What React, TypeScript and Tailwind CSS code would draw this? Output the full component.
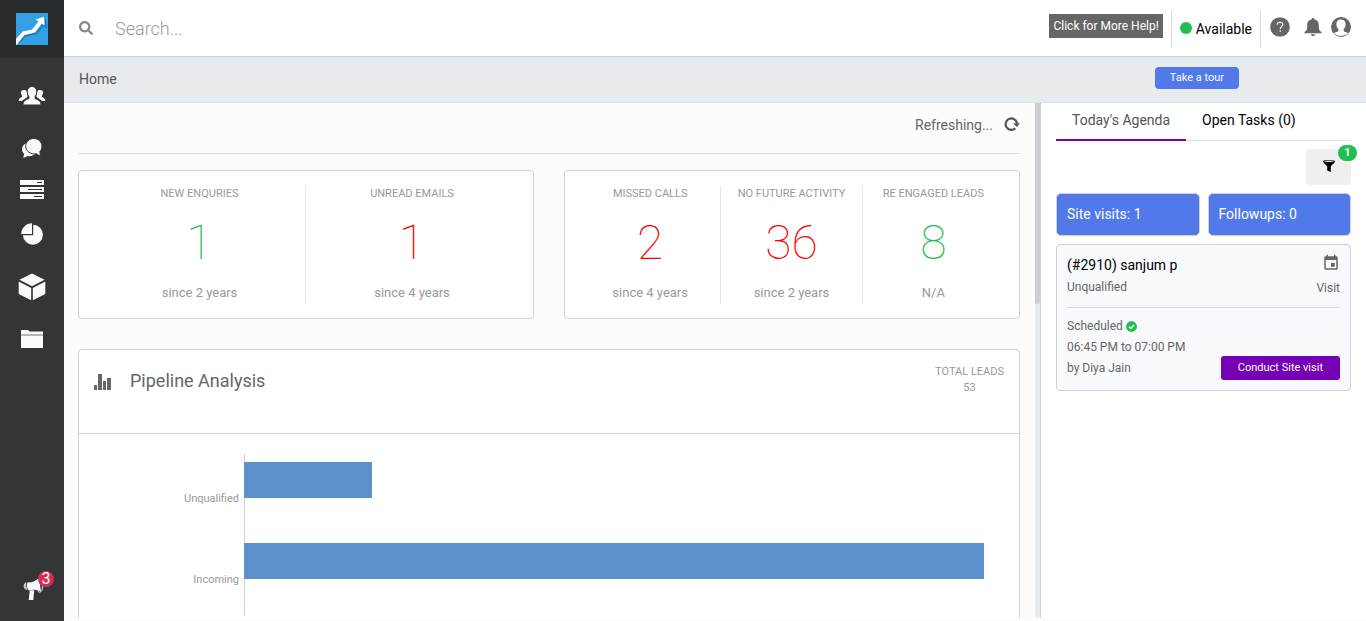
import React from "react";
import { FaSearch } from "react-icons/fa";
import { MdEvent } from "react-icons/md";

type Metric = { label: string; value: string; note: string; tone: "good" | "bad" };

const activity: Metric[] = [
  { label: "NEW ENQURIES", value: "1", note: "since 2 years", tone: "good" },
  { label: "UNREAD EMAILS", value: "1", note: "since 4 years", tone: "bad" },
];

const attention: Metric[] = [
  { label: "MISSED CALLS", value: "2", note: "since 4 years", tone: "bad" },
  { label: "NO FUTURE ACTIVITY", value: "36", note: "since 2 years", tone: "bad" },
  { label: "RE ENGAGED LEADS", value: "8", note: "N/A", tone: "good" },
];

const pipeline = [
  { stage: "Unqualified", share: 16.8 },
  { stage: "Incoming", share: 97.5 },
];

function Logo() {
  return (
    <svg width="32" height="32" viewBox="0 0 32 32" aria-hidden="true">
      <rect width="32" height="32" fill="#339fe5" />
      <path d="M3 30 L9 23 L20.500 20.500 L27.500 11.500 L30 14 L29.500 6" fill="none" stroke="#1d7cba" strokeWidth="1.500" />
      <path d="M0 31.500 V26 L6.500 18.500 L16 16.500 L22.500 8.500 L19.500 6.500 L28 3.800 L28.500 12.500 L25.800 10.500 L18.800 19.500 L8.500 22 L1 31.500 Z" fill="#fff" />
    </svg>
  );
}

function PeopleIcon() {
  return (
    <svg width="28" height="20" viewBox="0 0 28 20" fill="#f8fafd" aria-hidden="true">
      <path d="M14 1c2.700 0 4.200 1.700 4.200 4.600 0 2.300-.7 4-1.600 5v1.600c0 1.400 5.800 1.800 5.800 5.200V18.500H5.600v-1.100c0-3.400 5.800-3.800 5.800-5.200v-1.600c-.9-1-1.600-2.700-1.600-5C9.800 2.700 11.300 1 14 1z" />
      <path d="M6 4c1.300 0 2.300.5 2.700 1.400.1 2.300.6 3.900 1 5.100l-.9.700c.1 1-3.600 1.800-4.700 3.700H.8v-1c0-2 3.200-2.200 3.200-3.400v-.9c-.7-.7-1.100-1.700-1.100-3C2.900 4.800 4.200 4 6 4z" />
      <path d="M22 4c-1.300 0-2.300.5-2.700 1.400-.1 2.300-.6 3.900-1 5.100l.9.700c-.1 1 3.600 1.800 4.700 3.700h3.300v-1c0-2-3.200-2.200-3.200-3.400v-.9c.7-.7 1.100-1.700 1.100-3C25.100 4.800 23.800 4 22 4z" />
    </svg>
  );
}

function ChatIcon() {
  return (
    <svg width="22" height="20" viewBox="0 0 22 20" aria-hidden="true">
      <path d="M8.500 4.500c4.200 0 7.500 3 7.500 6.800s-3.300 6.900-7.500 6.900c-.8 0-1.500-.1-2.200-.3C5 19 3.600 19.400 2 19.400c.7-1.100 1-2.200 1-3.700-1.200-1.200-2-2.700-2-4.400 0-3.800 3.300-6.800 7.500-6.800z" fill="#f8fafd" />
      <path d="M12.700.5c4.600 0 8.200 3.400 8.200 7.700 0 2.200-.7 4-2 5.400 0 1.500.3 2.600 1 3.700-2 0-3.500-.5-4.500-1.600-5.500 1.200-10.700-2.400-10.700-7.500C4.700 3.900 8.300.5 12.700.5z" fill="#f8fafd" stroke="#343537" />
    </svg>
  );
}

function ServersIcon() {
  return (
    <svg width="26" height="20" viewBox="0 0 26 20" aria-hidden="true">
      <g fill="#f8fafd">
        <rect x="1" y="0" width="24" height="5" />
        <rect x="1" y="7" width="24" height="5" />
        <rect x="1" y="14" width="24" height="5" />
      </g>
      <g fill="#343537">
        <rect x="18" y="2" width="5" height="1" />
        <rect x="9" y="9" width="14" height="1" />
        <rect x="15" y="16" width="8" height="1" />
      </g>
    </svg>
  );
}

function PieIcon() {
  return (
    <svg width="24" height="24" viewBox="0 0 24 24" fill="#f8fafd" aria-hidden="true">
      <path d="M12 1.200V12H1.200C1.200 6 6 1.200 12 1.200z" />
      <path d="M13.200 2.800A10 10 0 1 1 2.900 13.200H13.200z" />
    </svg>
  );
}

function CubeIcon() {
  return (
    <svg width="28" height="28" viewBox="0 0 28 28" fill="#f8fafd" aria-hidden="true">
      <path d="M14 .5 26.500 6.800 14 13.300 1.500 6.800z" />
      <path d="M.7 8.500 13.200 14.900V27.300L.7 21z" />
      <path d="M27.300 8.500 14.800 14.900V27.300L27.300 21z" />
    </svg>
  );
}

function FolderIcon() {
  return (
    <svg width="24" height="20" viewBox="0 0 24 20" fill="#f8fafd" aria-hidden="true">
      <path d="M1 1h7l1.500 1.500H23V5H1z" />
      <path d="M1 5h22v1.500H1z" fill="#b4b6b9" />
      <path d="M1 6.500h22V19H1z" />
    </svg>
  );
}

function MegaphoneIcon() {
  return (
    <svg width="24" height="24" viewBox="0 0 24 24" aria-hidden="true">
      <path d="M5.500 5.500C9 6 13 4.500 17 1l2 13.500c-4-2-8.500-2.500-12-1C5 12 4.500 8 5.500 5.500z" fill="#f8fafd" />
      <path d="M4.500 5.200C2.300 5.500 1.200 8.500 1.900 10.500c.5 1.500 1.900 2.600 3.600 2.500C4.200 11 4 7.500 4.500 5.200z" fill="#c9cbce" />
      <path d="M7.800 13.200h4.400l-.9 9.800H6.700z" fill="#f8fafd" />
      <path d="M15.500 13.500c2 3.500 5 1.500 5.300-5" fill="none" stroke="#f8fafd" />
    </svg>
  );
}

function HelpIcon() {
  return (
    <svg width="20" height="20" viewBox="0 0 20 20" aria-hidden="true">
      <circle cx="10" cy="10" r="9.800" fill="#666" />
      <path d="M7.200 7.700C7.200 5.900 8.300 5.200 10 5.200s2.800.9 2.800 2.400c0 2-2.600 2.100-2.600 4.500" fill="none" stroke="#fff" strokeWidth="1.100" />
      <rect x="9.600" y="13.300" width="1.300" height="1.500" fill="#fff" />
    </svg>
  );
}

function BellIcon() {
  return (
    <svg width="18" height="20" viewBox="0 0 18 20" fill="#666" aria-hidden="true">
      <path d="M9 1c.7 0 1.200.5 1.200 1.300 3 .6 4.600 2.700 4.600 5.700 0 4.500.5 6 2.800 7v1.200H.4V15c2.300-1 2.800-2.500 2.800-7 0-3 1.600-5.100 4.600-5.700C7.800 1.500 8.300 1 9 1z" />
      <path d="M6.700 17.200h4.600c-.2 1.200-1.100 1.800-2.300 1.800s-2.100-.6-2.300-1.800z" />
    </svg>
  );
}

function AccountIcon() {
  return (
    <svg width="20" height="20" viewBox="0 0 20 20" aria-hidden="true">
      <circle cx="10" cy="10" r="9.400" fill="#666" stroke="#666" strokeWidth="1.100" />
      <path d="M10 2.600c3 0 4.600 2 4.600 4.700 0 2.200-.9 4-2 5v1.500c0 1 3.400 1.400 4.500 2.400A9.200 9.200 0 0 1 10 19a9.200 9.200 0 0 1-7.100-2.800c1.100-1 4.500-1.400 4.500-2.400v-1.500c-1.100-1-2-2.800-2-5C5.400 4.600 7 2.600 10 2.600z" fill="#fff" />
    </svg>
  );
}

function RefreshIcon() {
  return (
    <svg width="16" height="16" viewBox="0 0 16 16" aria-hidden="true">
      <path d="M11.300 12.300A5.700 5.700 0 1 1 13 7.500" fill="none" stroke="#555" strokeWidth="2.200" />
      <path d="M9.200 7.200H16l-3.200 3.800z" fill="#555" />
    </svg>
  );
}

function BarsIcon() {
  return (
    <svg width="18" height="16" viewBox="0 0 18 16" fill="#666" aria-hidden="true">
      <rect x="0" y="11" width="3" height="5" />
      <rect x="4" y="0" width="4" height="16" />
      <rect x="9" y="7" width="3" height="9" />
      <rect x="13" y="4" width="4" height="12" />
    </svg>
  );
}

function FunnelIcon() {
  return (
    <svg width="14" height="14" viewBox="0 0 14 14" aria-hidden="true">
      <path d="M1 2.500C1 .5 13 .5 13 2.500c0 1-3.700 4-4.200 5V13L5.200 11.500v-4C4.700 6.500 1 3.500 1 2.500z" fill="#000" />
      <ellipse cx="7" cy="2.300" rx="4.600" ry=".8" fill="#ddd" />
    </svg>
  );
}

function CheckIcon() {
  return (
    <svg width="11" height="11" viewBox="0 0 11 11" aria-hidden="true">
      <circle cx="5.500" cy="5.500" r="5.400" fill="#1fbf52" />
      <path d="M3 5.700 4.800 7.400 8 3.900" fill="none" stroke="#fff" strokeWidth="1.500" />
    </svg>
  );
}

function MetricCard({ items }: { items: Metric[] }) {
  return (
    <section className="grid flex-1 auto-cols-fr grid-flow-col rounded border border-[#cdd0da] bg-white p-[15px]">
      {items.map((m) => (
        <div
          key={m.label}
          className="flex flex-col items-center border-r border-[#e3e5e8] pb-0.5 whitespace-nowrap last:border-r-0"
        >
          <h3 className="text-[11px] leading-[15px] text-[#999]">{m.label}</h3>
          <p
            className={
              m.tone === "good"
                ? "mt-3 text-5xl leading-[60px] font-thin text-[#1fbf52]"
                : "mt-3 text-5xl leading-[60px] font-thin text-[#ff0000]"
            }
          >
            {m.value}
          </p>
          <p className="mt-3 text-[13px] leading-4 text-[#999]">{m.note}</p>
        </div>
      ))}
    </section>
  );
}

function Sidebar() {
  return (
    <nav aria-label="Main" className="flex w-16 shrink-0 flex-col items-center bg-[#343537]">
      <a href="#home" aria-label="Dashboard" className="flex h-[58px] w-full items-center justify-center bg-[#282a2b]">
        <Logo />
      </a>
      <a href="#contacts" aria-label="Contacts" className="mt-7"><PeopleIcon /></a>
      <a href="#messages" aria-label="Messages" className="mt-8"><ChatIcon /></a>
      <a href="#lists" aria-label="Lists" className="mt-[22px]"><ServersIcon /></a>
      <a href="#reports" aria-label="Reports" className="mt-[22px]"><PieIcon /></a>
      <a href="#inventory" aria-label="Inventory" className="mt-[27px]"><CubeIcon /></a>
      <a href="#files" aria-label="Files" className="mt-7"><FolderIcon /></a>
      <a href="#news" aria-label="Announcements" className="relative mt-auto mb-5 ml-1">
        <MegaphoneIcon />
        <span className="absolute -top-1.5 -right-2 flex size-4 items-center justify-center rounded-full bg-[#d62d50] text-base text-white">
          3
        </span>
      </a>
    </nav>
  );
}

function TopBar() {
  return (
    <header className="flex h-[57px] shrink-0 items-center border-b border-[#cdd0d6] bg-white pr-[15px] pl-[15px]">
      <label htmlFor="search" className="text-[#888]">
        <FaSearch size={14} aria-label="Search" />
      </label>
      <input
        id="search"
        type="text"
        placeholder="Search..."
        className="ml-[22px] min-w-0 flex-1 pt-0.5 text-lg font-light text-[#555] outline-none placeholder:text-[#999]"
      />
      <button type="button" className="mb-1 h-6 bg-[#666] px-1 pb-px text-xs text-white">
        Click for More Help!
      </button>
      <button
        type="button"
        className="ml-2 flex h-[37px] items-center gap-1 border-x border-[#d5d8dc] px-2 text-sm text-black"
      >
        <span className="size-3 rounded-full bg-[#1fbf52]" />
        <span className="pt-0.5">Available</span>
      </button>
      <div className="mb-[3px] ml-[9px] flex items-center">
        <button type="button" aria-label="Help"><HelpIcon /></button>
        <button type="button" aria-label="Notifications" className="ml-[14px]"><BellIcon /></button>
        <button type="button" aria-label="Account" className="ml-[9px]"><AccountIcon /></button>
      </div>
    </header>
  );
}

function Pipeline() {
  return (
    <section className="mt-[30px] rounded-t border border-[#cdd0da] bg-white">
      <header className="flex h-[84px] items-start border-b border-[#cdd0da] px-[15px] pt-[14px]">
        <div className="mt-[10px]"><BarsIcon /></div>
        <h2 className="ml-[18px] text-lg leading-[34px] text-[#666]">Pipeline Analysis</h2>
        <p className="ml-auto text-center text-[11px] leading-4 text-[#999]">
          TOTAL LEADS
          <br />
          53
        </p>
      </header>
      <ul className="h-[400px] pt-5 pr-[15px]">
        {pipeline.map((row) => (
          <li key={row.stage} className="flex h-[81px]">
            <span className="w-40 pt-[37px] text-right text-[11px] leading-4 text-[#999]">{row.stage}</span>
            <div className="ml-[5px] flex-1 border-l border-[#c8d3ee] pt-2">
              <div className="-ml-px h-9 bg-[#5c90ca]" style={{ width: row.share + "%" }} />
            </div>
          </li>
        ))}
      </ul>
    </section>
  );
}

function Agenda() {
  return (
    <aside className="w-[326px] shrink-0 border-l border-[#cdd0da] bg-white px-[15px]">
      <div role="tablist" className="flex h-[38px] border-b border-[#dee0e4] text-sm">
        <button role="tab" aria-selected="true" type="button" className="h-[38px] border-b-2 border-[#7600b5] px-4 pb-[3px] text-[#555]">
          Today's Agenda
        </button>
        <button role="tab" aria-selected="false" type="button" className="h-[38px] px-4 pb-[5px] text-black">
          Open Tasks (0)
        </button>
      </div>
      <div className="mt-2 flex justify-end">
        <button
          type="button"
          aria-label="Filters"
          className="relative flex h-9 w-[45px] items-center justify-center rounded bg-[#efefef] pb-0.5"
        >
          <FunnelIcon />
          <span className="absolute -top-1 -right-1.5 flex h-4 w-[19px] items-center justify-center rounded-full bg-[#1fbf52] text-[11px] font-bold text-white">
            1
          </span>
        </button>
      </div>
      <div className="mt-2 grid grid-cols-2 gap-2">
        <button type="button" className="h-[43px] rounded-[5px] border border-[#cdd0da] bg-[#5179e9] px-2.5 pb-0.5 text-left text-sm text-white">
          Site visits: 1
        </button>
        <button type="button" className="h-[43px] rounded-[5px] border border-[#cdd0da] bg-[#5179e9] px-2.5 pb-0.5 text-left text-sm text-white">
          Followups: 0
        </button>
      </div>
      <article className="mt-2 rounded border border-[#cdd0da] bg-[#f8f9fc] px-2.5 pt-2 pb-2.5 text-xs text-[#666]">
        <div className="flex justify-between border-b border-[#d8dbe0] pb-[10px]">
          <div>
            <h3 className="text-sm leading-6 text-black">(#2910) sanjum p</h3>
            <p className="leading-5">Unqualified</p>
          </div>
          <div className="flex flex-col items-end pt-px">
            <MdEvent size={18} />
            <p className="mt-2 leading-4">Visit</p>
          </div>
        </div>
        <div className="mt-2 flex items-end justify-between">
          <div className="pb-px leading-[21px]">
            <p className="flex items-center gap-[3px]">
              Scheduled <CheckIcon />
            </p>
            <p>06:45 PM to 07:00 PM</p>
            <p>by Diya Jain</p>
          </div>
          <button type="button" className="h-6 rounded-[3px] bg-[#7600b5] px-[17px] text-[11px] text-white">
            Conduct Site visit
          </button>
        </div>
      </article>
    </aside>
  );
}

export default function App() {
  return (
    <div className="flex h-screen overflow-hidden bg-[#fcfcfc] font-['Roboto',sans-serif]">
      <Sidebar />
      <div className="flex min-w-0 flex-1 flex-col">
        <TopBar />
        <div className="flex h-[46px] shrink-0 items-start justify-between border-b border-[#dde0e4] bg-[#e7ebee] pt-[10px] pr-[127px] pl-[15px]">
          <h1 className="text-sm leading-6 text-[#555]">Home</h1>
          <button type="button" className="h-[22px] rounded-sm bg-[#5179e9] px-[15px] text-[11px] text-white">
            Take a tour
          </button>
        </div>
        <div className="mb-[3px] flex min-h-0 flex-1">
          <main className="min-w-0 flex-1 overflow-hidden pr-[15px] pl-[14px]">
            <div className="flex h-[51px] items-center justify-end gap-[11px] border-b border-[#dfe0e2] pb-[7px] text-[#666]">
              <span className="text-sm">Refreshing...</span>
              <button type="button" aria-label="Refresh" className="pb-0.5"><RefreshIcon /></button>
            </div>
            <div className="mt-4 flex gap-[30px]">
              <MetricCard items={activity} />
              <MetricCard items={attention} />
            </div>
            <Pipeline />
          </main>
          <div aria-hidden="true" className="w-[5px] shrink-0 rounded-b bg-[#e7ebee]">
            <div className="h-[201px] rounded-b bg-[#cdcfd2]" />
          </div>
          <Agenda />
        </div>
      </div>
    </div>
  );
}
